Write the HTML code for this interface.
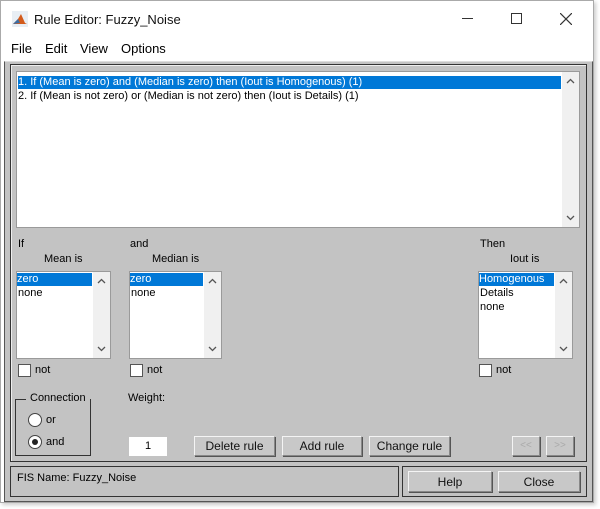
<!DOCTYPE html><html><head><style>
body{margin:0;width:600px;height:509px;background:#fff;position:relative;overflow:hidden;font-family:"Liberation Sans",sans-serif;}
.a{position:absolute;box-sizing:border-box}
.t{position:absolute;font-size:11px;color:#000;white-space:nowrap}
.lb{background:#fff;border:1px solid #9a9a9a}
.sel{background:#0078d7;color:#fff}
.sb{position:absolute;right:0;top:0;bottom:0;width:17px;background:#f0f0f0;}
.up,.dn{position:absolute;right:4px;width:9px;height:6px}
.up{top:6px}.dn{bottom:6px}
.btn{position:absolute;box-sizing:border-box;background:#c8c8c8;border:1px solid #888;border-top-color:#f4f4f4;border-left-color:#f4f4f4;box-shadow:1px 1px 0 #555;font-size:12px;text-align:center;color:#111}
.cb{position:absolute;width:13px;height:13px;background:#fff;border:1px solid #555;box-sizing:border-box}
</style></head><body>
<div class="a" style="left:0;top:0;width:594px;height:503px;border:1px solid #aaa;box-shadow:2px 2px 4px #ccc"></div>
<svg class="a" style="left:12px;top:11px" width="16" height="16" viewBox="0 0 16 16"><rect width="16" height="16" fill="#e8eef4"/><path d="M1 13 L6 8 L9 3 L13 12 L15 13 Z" fill="#d35b1c"/><path d="M1 13 L6 8 L8 12 Z" fill="#3a6ea5"/></svg>
<div class="t" style="left:34px;top:12px;font-size:13px;color:#111">Rule Editor: Fuzzy_Noise</div>
<div class="a" style="left:462px;top:18px;width:11px;height:1px;background:#333"></div>
<div class="a" style="left:511px;top:13px;width:11px;height:11px;border:1px solid #333"></div>
<svg class="a" style="left:560px;top:13px" width="12" height="12"><path d="M0 0L12 12M12 0L0 12" stroke="#333" stroke-width="1.2"/></svg>
<div class="t" style="left:11px;top:41px;font-size:13px">File</div>
<div class="t" style="left:45px;top:41px;font-size:13px">Edit</div>
<div class="t" style="left:80px;top:41px;font-size:13px">View</div>
<div class="t" style="left:121px;top:41px;font-size:13px">Options</div>
<div class="a" style="left:4px;top:61px;width:589px;height:441px;background:#c3c3c3;border:1px solid #555;border-top:1px solid #ddd"></div>
<div class="a" style="left:10px;top:64px;width:577px;height:398px;border:1px solid #333;box-shadow:inset 1px 1px 0 #eee"></div>
<div class="a lb" style="left:16px;top:71px;width:564px;height:157px"><div class="sb"></div>
<div class="t sel" style="left:1px;top:4px;width:543px;height:13px;line-height:13px;font-size:11px">1. If (Mean is zero) and (Median is zero) then (Iout is Homogenous) (1)</div>
<div class="t" style="left:1px;top:18px">2. If (Mean is not zero) or (Median is not zero) then (Iout is Details) (1)</div>
<svg class="up" viewBox="0 0 9 6"><path d="M1 5L4.5 1.5L8 5" stroke="#555" stroke-width="1.3" fill="none"/></svg><svg class="dn" viewBox="0 0 9 6"><path d="M1 1L4.5 4.5L8 1" stroke="#555" stroke-width="1.3" fill="none"/></svg></div>
<div class="t" style="left:18px;top:238px">If</div><div class="t" style="left:44px;top:253px">Mean is</div>
<div class="t" style="left:130px;top:238px">and</div><div class="t" style="left:152px;top:253px">Median is</div>
<div class="t" style="left:480px;top:238px">Then</div><div class="t" style="left:510px;top:253px">Iout is</div>
<div class="a lb" style="left:16px;top:271px;width:95px;height:88px"><div class="sb"></div><div class="t sel" style="left:0;top:1px;width:75px;height:13px;line-height:13px">zero</div><div class="t" style="left:1px;top:15px">none</div><svg class="up" viewBox="0 0 9 6"><path d="M1 5L4.5 1.5L8 5" stroke="#555" stroke-width="1.3" fill="none"/></svg><svg class="dn" viewBox="0 0 9 6"><path d="M1 1L4.5 4.5L8 1" stroke="#555" stroke-width="1.3" fill="none"/></svg></div>
<div class="a lb" style="left:129px;top:271px;width:93px;height:88px"><div class="sb"></div><div class="t sel" style="left:0;top:1px;width:73px;height:13px;line-height:13px">zero</div><div class="t" style="left:1px;top:15px">none</div><svg class="up" viewBox="0 0 9 6"><path d="M1 5L4.5 1.5L8 5" stroke="#555" stroke-width="1.3" fill="none"/></svg><svg class="dn" viewBox="0 0 9 6"><path d="M1 1L4.5 4.5L8 1" stroke="#555" stroke-width="1.3" fill="none"/></svg></div>
<div class="a lb" style="left:478px;top:271px;width:95px;height:88px"><div class="sb"></div><div class="t sel" style="left:0;top:1px;width:75px;height:13px;line-height:13px">Homogenous</div><div class="t" style="left:1px;top:15px">Details</div><div class="t" style="left:1px;top:29px">none</div><svg class="up" viewBox="0 0 9 6"><path d="M1 5L4.5 1.5L8 5" stroke="#555" stroke-width="1.3" fill="none"/></svg><svg class="dn" viewBox="0 0 9 6"><path d="M1 1L4.5 4.5L8 1" stroke="#555" stroke-width="1.3" fill="none"/></svg></div>
<div class="cb" style="left:18px;top:364px"></div><div class="t" style="left:35px;top:364px">not</div>
<div class="cb" style="left:130px;top:364px"></div><div class="t" style="left:147px;top:364px">not</div>
<div class="cb" style="left:479px;top:364px"></div><div class="t" style="left:496px;top:364px">not</div>
<div class="a" style="left:15px;top:399px;width:76px;height:57px;border:1px solid #333"></div>
<div class="t" style="left:26px;top:392px;background:#c3c3c3;padding:0 4px">Connection</div>
<div class="a" style="left:28px;top:413px;width:14px;height:14px;border-radius:50%;background:#fff;border:1px solid #444;box-sizing:border-box"></div><div class="t" style="left:46px;top:414px">or</div>
<div class="a" style="left:28px;top:435px;width:14px;height:14px;border-radius:50%;background:#fff;border:1px solid #444;box-sizing:border-box"><div class="a" style="left:3px;top:3px;width:6px;height:6px;border-radius:50%;background:#222"></div></div><div class="t" style="left:46px;top:436px">and</div>
<div class="t" style="left:128px;top:392px">Weight:</div>
<div class="a" style="left:129px;top:437px;width:38px;height:19px;background:#fff;font-size:11px;text-align:center;line-height:19px">1</div>
<div class="btn" style="left:194px;top:436px;width:81px;height:20px;line-height:18px">Delete rule</div>
<div class="btn" style="left:282px;top:436px;width:80px;height:20px;line-height:18px">Add rule</div>
<div class="btn" style="left:369px;top:436px;width:81px;height:20px;line-height:18px">Change rule</div>
<div class="btn" style="left:512px;top:436px;width:28px;height:20px;line-height:18px;color:#aaa;font-size:10px">&lt;&lt;</div>
<div class="btn" style="left:546px;top:436px;width:28px;height:20px;line-height:18px;color:#aaa;font-size:10px">&gt;&gt;</div>
<div class="a" style="left:10px;top:466px;width:389px;height:31px;border:1px solid #333"></div>
<div class="t" style="left:17px;top:472px">FIS Name: Fuzzy_Noise</div>
<div class="a" style="left:402px;top:466px;width:185px;height:31px;border:1px solid #333"></div>
<div class="btn" style="left:408px;top:471px;width:84px;height:21px;line-height:20px">Help</div>
<div class="btn" style="left:498px;top:471px;width:82px;height:21px;line-height:20px">Close</div>
</body></html>
